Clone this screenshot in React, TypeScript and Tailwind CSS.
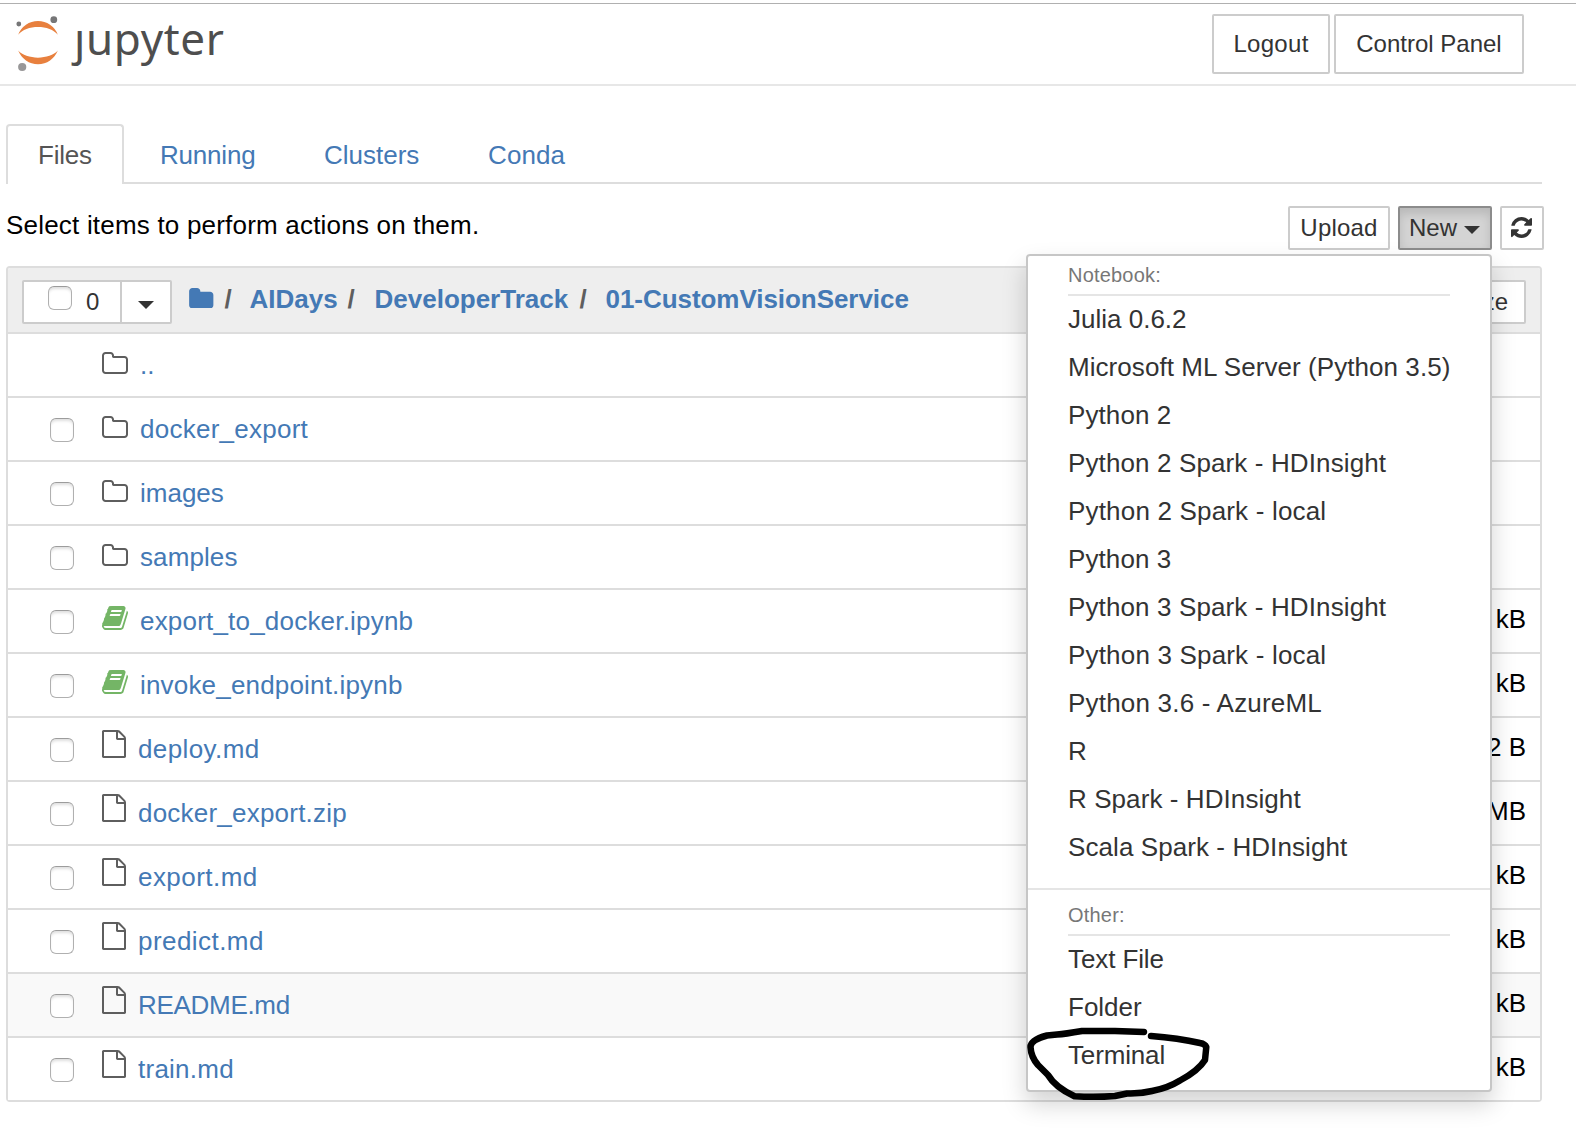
import React from "react";

const PATHS = {
  folder:
    "M1728 608v704q0 92-66 158t-158 66h-1216q-92 0-158-66t-66-158v-960q0-92 66-158t158-66h320q92 0 158 66t66 158v32h672q92 0 158 66t66 158z",
  folderOpen:
    "M1600 1312v-704q0-40-28-68t-68-28h-704q-40 0-68-28t-28-68v-64q0-40-28-68t-68-28h-320q-40 0-68 28t-28 68v960q0 40 28 68t68 28h1216q40 0 68-28t28-68zm128-704v704q0 92-66 158t-158 66h-1216q-92 0-158-66t-66-158v-960q0-92 66-158t158-66h320q92 0 158 66t66 158v32h672q92 0 158 66t66 158z",
  file: "M1596 380q28 28 48 76t20 88v1152q0 40-28 68t-68 28h-1344q-40 0-68-28t-28-68v-1600q0-40 28-68t68-28h896q40 0 88 20t76 48zm-444-244v376h376q-10-29-22-41l-313-313q-12-12-41-22zm384 1528v-1024h-416q-40 0-68-28t-28-68v-416h-768v1536h1280z",
  book: "M1703 478q40 57 18 129l-275 906q-19 64-76.5 107.5t-122.5 43.5h-923q-77 0-148.5-53.5t-99.5-131.5q-24-67-2-127 0-4 3-27t4-37q1-8-3-21.5t-3-19.5q2-11 8-21t16.5-23.5 16.5-23.5q23-38 45-91.5t30-91.5q3-10 .5-30t-.5-28q3-11 17-28t17-23q21-36 42-92t25-90q1-9-2.5-32t.5-28q4-13 22-30.5t22-22.5q19-26 42.5-84.5t27.5-96.5q1-8-3-25.5t-2-26.5q2-8 9-18t18-23 17-21q8-12 16.5-30.5t15-35 16-36 19.5-32 26.5-23.5 36-11.5 47.5 5.5l-1 3q38-9 51-9h761q74 0 114 56t18 130l-274 906q-36 119-71.5 153.5t-128.5 34.5h-869q-27 0-38 15-11 16-1 43 24 70 144 70h923q29 0 56-15.5t35-41.5l300-987q7-22 5-57 38 15 59 43zm-1064 2q-4 13 2 22.5t20 9.5h608q13 0 25.5-9.5t16.5-22.5l21-64q4-13-2-22.5t-20-9.5h-608q-13 0-25.5 9.5t-16.5 22.5zm-83 256q-4 13 2 22.5t20 9.5h608q13 0 25.5-9.5t16.5-22.5l21-64q4-13-2-22.5t-20-9.5h-608q-13 0-25.5 9.5t-16.5 22.5z",
  refresh:
    "M1639 1056q0 5-1 7-64 268-268 434.5t-478 166.5q-146 0-282.5-55t-243.5-157l-129 129q-19 19-45 19t-45-19-19-45v-448q0-26 19-45t45-19h448q26 0 45 19t19 45-19 45l-137 137q71 66 161 102t187 36q134 0 250-65t186-179q11-17 53-117 8-23 30-23h192q13 0 22.5 9.5t9.5 22.5zm25-800v448q0 26-19 45t-45 19h-448q-26 0-45-19t-19-45 19-45l138-138q-148-137-349-137-134 0-250 65t-186 179q-11 17-53 117-8 23-30 23h-199q-13 0-22.5-9.5t-9.5-22.5v-7q65-268 270-434.5t480-166.5q146 0 284 55.5t245 156.5l130-129q19-19 45-19t45 19 19 45z",
};

type Kind = "folder" | "notebook" | "file";
type Entry = { name: string; kind: Kind; size?: string; up?: boolean; hover?: boolean; tracking: string };

const ENTRIES: Entry[] = [
  { name: "..", kind: "folder", up: true, tracking: "" },
  { name: "docker_export", kind: "folder", tracking: "tracking-[0.25px]" },
  { name: "images", kind: "folder", tracking: "" },
  { name: "samples", kind: "folder", tracking: "tracking-[0.1px]" },
  { name: "export_to_docker.ipynb", kind: "notebook", size: "kB", tracking: "tracking-[0.2px]" },
  { name: "invoke_endpoint.ipynb", kind: "notebook", size: "kB", tracking: "tracking-[0.18px]" },
  { name: "deploy.md", kind: "file", size: "2 B", tracking: "tracking-[0.4px]" },
  { name: "docker_export.zip", kind: "file", size: "MB", tracking: "tracking-[0.22px]" },
  { name: "export.md", kind: "file", size: "kB", tracking: "tracking-[0.45px]" },
  { name: "predict.md", kind: "file", size: "kB", tracking: "tracking-[0.45px]" },
  { name: "README.md", kind: "file", size: "kB", hover: true, tracking: "tracking-[-0.3px]" },
  { name: "train.md", kind: "file", size: "kB", tracking: "tracking-[0.25px]" },
];

const KERNELS: [string, string][] = [
  ["Julia 0.6.2", ""],
  ["Microsoft ML Server (Python 3.5)", "tracking-[0.06px]"],
  ["Python 2", "tracking-[0.1px]"],
  ["Python 2 Spark - HDInsight", "tracking-[0.12px]"],
  ["Python 2 Spark - local", "tracking-[0.18px]"],
  ["Python 3", "tracking-[0.1px]"],
  ["Python 3 Spark - HDInsight", "tracking-[0.12px]"],
  ["Python 3 Spark - local", "tracking-[0.18px]"],
  ["Python 3.6 - AzureML", "tracking-[0.2px]"],
  ["R", ""],
  ["R Spark - HDInsight", "tracking-[0.08px]"],
  ["Scala Spark - HDInsight", "tracking-[0.08px]"],
];

const OTHERS: [string, string][] = [
  ["Text File", "tracking-[-0.1px]"],
  ["Folder", ""],
  ["Terminal", "tracking-[-0.15px]"],
];

function EntryIcon({ kind }: { kind: Kind }) {
  if (kind === "folder")
    return (
      <svg viewBox="64 128 1664 1408" className="-mt-[4px] mr-[12px] h-[22px] w-[26px] fill-[#5e5e5e]">
        <path d={PATHS.folderOpen} />
      </svg>
    );
  if (kind === "notebook")
    return (
      <svg viewBox="64 128 1664 1536" className="-mt-[6px] mr-[12px] h-[24px] w-[26px] fill-[#74b566]">
        <path d={PATHS.book} />
      </svg>
    );
  return (
    <svg viewBox="128 0 1536 1792" className="-mt-[10px] mr-[12px] h-[28px] w-[24px] fill-[#5e5e5e]">
      <path d={PATHS.file} />
    </svg>
  );
}

function Checkbox() {
  return (
    <span className="block size-[24px] shrink-0 rounded-[6px] border-[1.5px] border-[#b0b0b0] border-t-[#9c9c9c] bg-white shadow-[inset_0_3px_3px_-1px_rgba(0,0,0,0.13)]" />
  );
}

function Caret() {
  return <span className="block border-x-[8px] border-t-[8px] border-x-transparent border-t-[#333]" />;
}

function Logo() {
  return (
    <div className="flex items-start">
      <svg viewBox="0 0 44 58" className="mt-[15px] h-[58px] w-[44px]">
        <path d="M2.2 19.7A21.2 21.2 0 0 1 41.800 19.7C34 9.3 10 9.3 2.2 19.7z" fill="#e8803e" />
        <path d="M2.2 35.6A21.2 21.2 0 0 0 41.800 35.6C34 45 10 45 2.2 35.6z" fill="#e8803e" />
        <circle cx="2.8" cy="9" r="2.4" fill="#767677" />
        <circle cx="37.8" cy="4.7" r="3.4" fill="#767677" />
        <circle cx="6.2" cy="52" r="4.1" fill="#989798" />
      </svg>
      <span className="ml-[14px] mt-[3px] font-['Noto_Sans',sans-serif] text-[44px] leading-[70px] tracking-[0.65px] text-[#4e4e4e]">
        ȷupyter
      </span>
    </div>
  );
}

function MenuHeading({ children }: { children: React.ReactNode }) {
  return (
    <div className="mx-[40px] h-[40px] border-b-2 border-[#e5e5e5] text-[20px] leading-[38px] tracking-[0.2px] text-[#777]">
      {children}
    </div>
  );
}

function MenuItems({ items }: { items: [string, string][] }) {
  return (
    <ul className="mx-[40px]">
      {items.map(([label, tracking]) => (
        <li key={label} className={"h-[48px] whitespace-nowrap leading-[46px] text-[#333] " + tracking}>
          {label}
        </li>
      ))}
    </ul>
  );
}

function NewMenu() {
  return (
    <div className="absolute right-0 top-[48px] z-10 h-[838px] w-[466px] rounded-[4px] border-2 border-[#c6c6c6] bg-white shadow-[0_12px_24px_rgba(0,0,0,0.175)]">
      <MenuHeading>Notebook:</MenuHeading>
      <MenuItems items={KERNELS} />
      <div className="mb-[6px] mt-[16px] h-[2px] bg-[#e5e5e5]" />
      <MenuHeading>Other:</MenuHeading>
      <MenuItems items={OTHERS} />
      {/* hand-drawn loop around the Terminal entry */}
      <svg viewBox="1022 1022 194 82" className="absolute -left-[6px] top-[766px] h-[82px] w-[194px]">
        <path
          d="M1144 1032L1115 1031L1082 1031Q1065 1034 1057 1034.500L1047 1035.500Q1030.500 1040 1030.500 1047Q1031 1057 1038 1065L1048 1075Q1055 1087 1074.500 1096.300Q1096 1097.500 1115 1096L1127 1093.500Q1140 1094 1152 1091Q1168 1088 1180 1080.500Q1198 1071 1205 1060L1206.300 1047Q1205 1044 1200 1043Q1178 1038 1151 1036"
          fill="none"
          stroke="#000"
          strokeWidth="6.500"
          strokeLinecap="round"
          strokeLinejoin="round"
        />
      </svg>
    </div>
  );
}

export default function App() {
  return (
    <div className="h-[1148px] w-[1576px] overflow-hidden bg-white font-['Liberation_Sans',Arial,sans-serif] text-[26px] text-black">
      <header className="mt-[3px] flex h-[83px] justify-between border-b-2 border-t border-b-[#e7e7e7] border-t-[#b0b0b0] pl-[16px] pr-[52px]">
        <div className="-mt-[4px]">
          <Logo />
        </div>
        <div className="mt-[10px] flex gap-[4px] text-[24px] text-[#333]">
          <button className="h-[60px] w-[118px] rounded-[2px] border-2 border-[#ccc] bg-white pb-[1px] tracking-[0.3px]">Logout</button>
          <button className="h-[60px] w-[190px] rounded-[2px] border-2 border-[#ccc] bg-white pb-[1px]">Control Panel</button>
        </div>
      </header>

      <nav className="ml-[6px] mt-[38px] flex h-[60px] w-[1536px]">
        <div className="w-[118px] rounded-t-[4px] border-x-2 border-t-2 border-[#ddd] pl-[30px] leading-[58px] tracking-[-0.25px] text-[#555]">
          Files
        </div>
        <div className="flex grow border-b-2 border-[#ddd] leading-[62px] text-[#4479b5]">
          <a className="w-[164px] pl-[36px] tracking-[-0.2px]">Running</a>
          <a className="w-[164px] pl-[36px]">Clusters</a>
          <a className="w-[164px] pl-[36px] tracking-[0.1px]">Conda</a>
        </div>
      </nav>

      <div className="relative ml-[6px] mt-[22px] flex h-[44px] w-[1538px] text-[24px] text-[#333]">
        <p className="mr-auto text-[26px] leading-[38px] tracking-[0.2px] text-black">Select items to perform actions on them.</p>
        <button className="mr-[8px] w-[102px] rounded-[2px] border-2 border-[#ccc] bg-white pb-[1px] tracking-[0.2px]">Upload</button>
        <div className="relative mr-[8px] text-[26px]">
          <button className="flex h-[44px] w-[94px] items-center rounded-[2px] border-2 border-[#8c8c8c] bg-[#d4d4d4] pb-[1px] pl-[9px] text-[24px] shadow-[inset_0_6px_10px_rgba(0,0,0,0.125)]">
            New
            <span className="ml-[7px] mt-[5px]">
              <Caret />
            </span>
          </button>
          <NewMenu />
        </div>
        <button className="flex w-[44px] items-center justify-center rounded-[2px] border-2 border-[#ccc] bg-white pb-[1px] pr-[1px]">
          <svg viewBox="128 128 1536 1536" className="size-[21px] fill-[#333]">
            <path d={PATHS.refresh} />
          </svg>
        </button>
      </div>

      <main className="ml-[6px] mt-[16px] w-[1536px] rounded-[4px] border-2 border-[#ddd]">
        <div className="flex h-[64px] rounded-t-[2px] bg-[#eee] pl-[14px] pr-[14px] pt-[12px]">
          <div className="flex h-[44px] w-[150px] rounded-[2px] border-2 border-[#ccc] bg-white text-[#333]">
            <div className="flex w-[98px] border-r-2 border-[#ccc] pl-[24px]">
              <span className="mt-[4px]">
                <Checkbox />
              </span>
              <span className="ml-[14px] text-[24px] leading-[40px]">0</span>
            </div>
            <div className="flex grow items-center justify-center pt-[6px]">
              <Caret />
            </div>
          </div>
          <div className="ml-[17px] flex h-[38px] items-center whitespace-pre font-bold leading-[38px] text-[#4479b5]">
            <svg viewBox="64 128 1664 1408" className="-mt-[2px] mr-[11px] h-[20.5px] w-[24.5px] fill-[#4479b5]">
              <path d={PATHS.folder} />
            </svg>
            <span className="w-[25px] text-[#5e5e5e]">/</span>
            <span className="w-[98px]">AIDays</span>
            <span className="w-[27px] text-[#5e5e5e]">/</span>
            <span className="w-[205px]">DeveloperTrack</span>
            <span className="w-[26px] text-[#5e5e5e]">/</span>
            <span className="tracking-[-0.05px]">01-CustomVisionService</span>
          </div>
          <button className="ml-auto h-[44px] rounded-[2px] border-2 border-[#ccc] bg-white px-[16px] pb-[1px] text-[24px] text-[#333]">
            File size
          </button>
        </div>
        {ENTRIES.map((e) => (
          <div
            key={e.name}
            className={
              "flex h-[64px] items-center border-t-2 border-[#ddd] pl-[42px] pr-[14px] " + (e.hover ? "bg-[#f9f9f9]" : "bg-white")
            }
          >
            <span className={"mr-[28px] mt-[2px] " + (e.up ? "invisible" : "")}>
              <Checkbox />
            </span>
            <EntryIcon kind={e.kind} />
            <a className={"mt-[1px] text-[#4479b5] " + e.tracking}>{e.name}</a>
            <span className="-mt-[3px] ml-auto">{e.size}</span>
          </div>
        ))}
      </main>
    </div>
  );
}
